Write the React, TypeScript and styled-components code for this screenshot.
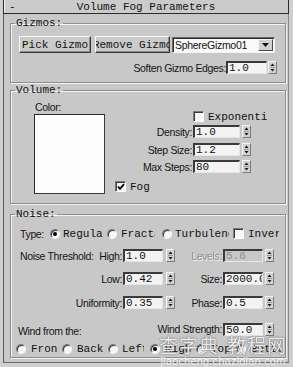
import React from 'react';
import styled, { createGlobalStyle } from 'styled-components';

const MONO = `"Liberation Mono", "DejaVu Sans Mono", monospace`;
const SANS = `"Liberation Sans", Arial, sans-serif`;

const Global = createGlobalStyle`
  html, body { margin: 0; padding: 0; background: #cdcdcd; }
  body { width: 293px; height: 367px; overflow: hidden; }
`;

const Screen = styled.div`
  position: relative;
  width: 293px;
  height: 367px;
  overflow: hidden;
  background: #cfcfcf;
  padding-left: 3px;
  box-sizing: border-box;
`;

const Rollout = styled.div`
  width: 286px;
  display: flex;
  flex-direction: column;
`;

const TitleBar = styled.div`
  height: 14px;
  box-sizing: border-box;
  border: 1px solid #2c2c2c;
  border-top: none;
  background: #cbcbcb;
  box-shadow: inset 1px 0 0 #f0f0f0;
  display: grid;
  grid-template-columns: 18px 1fr 18px;
  align-items: center;
  font: 11px/12px ${MONO};
  color: #111;
`;

const Collapse = styled.span`
  padding-left: 5px;
`;

const Title = styled.span`
  text-align: center;
`;

const Body = styled.div`
  height: 349px;
  box-sizing: border-box;
  border-left: 1px solid #5c5c5c;
  border-right: 1px solid #8a8a8a;
  border-bottom: 1px solid #6a6a6a;
  background: #c8c8c8;
  padding: 3px 1px 0 6px;
  display: flex;
  flex-direction: column;
`;

const Group = styled.fieldset<{ $h: number; $mt: number }>`
  margin: ${p => p.$mt}px 0 0 0;
  padding: 0;
  min-width: 0;
  width: 276px;
  height: ${p => p.$h}px;
  box-sizing: border-box;
  border: 1px solid #8c8c8c;
  box-shadow: 1px 1px 0 #f4f4f4, inset 1px 1px 0 #f4f4f4;
`;

const Legend = styled.legend`
  font: 11px/12px ${MONO};
  color: #111;
  margin-left: 4px;
  padding: 0 1px;
`;

const SansText = styled.span<{ $dim?: boolean }>`
  font: 10.5px/12px ${SANS};
  letter-spacing: -0.35px;
  color: ${p => (p.$dim ? '#8e8e8e' : '#141414')};
  text-shadow: ${p => (p.$dim ? '1px 1px 0 #f2f2f2' : 'none')};
  white-space: nowrap;
`;

const MonoText = styled.span<{ $w?: number }>`
  font: 11px/12px ${MONO};
  color: #111;
  white-space: nowrap;
  overflow: hidden;
  ${p => (p.$w ? `width: ${p.$w}px;` : '')}
  flex: none;
`;

/* ---------- Gizmos ---------- */
const GizmoInner = styled.div`
  padding: 7px 8px 0 8px;
  display: flex;
  flex-direction: column;
`;

const ButtonRow = styled.div`
  display: flex;
  align-items: center;
`;

const RaisedButton = styled.div<{ $w: number; $ml: number }>`
  width: ${p => p.$w}px;
  margin-left: ${p => p.$ml}px;
  height: 17px;
  box-sizing: border-box;
  background: #cbcbcb;
  border: 1px solid;
  border-color: #f6f6f6 #3a3a3a #3a3a3a #f6f6f6;
  box-shadow: inset -1px -1px 0 #8a8a8a;
  display: flex;
  justify-content: center;
  align-items: center;
  overflow: hidden;
  font: 11px/12px ${MONO};
  color: #111;
  white-space: nowrap;
  flex: none;
`;

const Dropdown = styled.div`
  margin-left: 2px;
  width: 103px;
  height: 16px;
  box-sizing: border-box;
  border: 1px solid;
  border-color: #6a6a6a #f4f4f4 #f4f4f4 #6a6a6a;
  box-shadow: inset 1px 1px 0 #2a2a2a;
  background: #fafafa;
  display: flex;
  align-items: center;
  padding: 1px 1px 1px 2px;
`;

const DropText = styled.span`
  flex: 1;
  font: 10.5px/12px ${SANS};
  letter-spacing: -0.3px;
  color: #111;
  white-space: nowrap;
`;

const DropArrow = styled.div`
  width: 15px;
  height: 12px;
  box-sizing: border-box;
  background: #d0d0d0;
  border: 1px solid;
  border-color: #f6f6f6 #4a4a4a #4a4a4a #f6f6f6;
  display: flex;
  align-items: center;
  justify-content: center;
`;

const SoftenRow = styled.div`
  margin-top: 8px;
  display: flex;
  justify-content: flex-end;
  align-items: center;
`;

/* ---------- Spinner ---------- */
const SpinWrap = styled.div`
  display: flex;
  align-items: center;
  flex: none;
`;

const SpinField = styled.div<{ $w: number; $disabled?: boolean }>`
  width: ${p => p.$w}px;
  height: 13px;
  box-sizing: border-box;
  border-style: solid;
  border-width: 2px 1px 1px 2px;
  border-color: #3a3a3a #e6e6e6 #e6e6e6 #3a3a3a;
  background: ${p => (p.$disabled ? '#c8c8c8' : '#f3f3f3')};
  color: ${p => (p.$disabled ? '#8e8e8e' : '#111')};
  font: 11px/10px ${MONO};
  padding-left: 1px;
  overflow: hidden;
  white-space: nowrap;
`;

const SpinArrows = styled.div<{ $ml: number }>`
  margin-left: ${p => p.$ml}px;
  width: 9px;
  height: 13px;
  box-sizing: border-box;
  background: #d2d2d2;
  border: 1px solid;
  border-color: #f4f4f4 #7a7a7a #7a7a7a #f4f4f4;
  display: flex;
  align-items: center;
  justify-content: center;
`;

const ArrowGlyph = () => (
  <svg width="5" height="9" viewBox="0 0 5 9">
    <path d="M2.5 0.5 L4.5 3 L0.5 3 Z" fill="#111" />
    <rect x="0" y="4" width="5" height="1" fill="#9a9a9a" />
    <path d="M0.5 6 L4.5 6 L2.5 8.5 Z" fill="#111" />
  </svg>
);

const Spinner = ({ value, w = 40, gap = 3, disabled }: { value: string; w?: number; gap?: number; disabled?: boolean }) => (
  <SpinWrap>
    <SpinField $w={w} $disabled={disabled}>{value}</SpinField>
    <SpinArrows $ml={gap}>
      <ArrowGlyph />
    </SpinArrows>
  </SpinWrap>
);

/* ---------- Radio / Check ---------- */
const RadioCircle = styled.span<{ $on?: boolean }>`
  width: 10px;
  height: 10px;
  border-radius: 50%;
  box-sizing: border-box;
  flex: none;
  background: #f6f6f6;
  border: 1px solid;
  border-color: #7a7a7a #fafafa #fafafa #7a7a7a;
  box-shadow: inset 1px 1px 0 #3a3a3a;
  display: flex;
  align-items: center;
  justify-content: center;
  &::after {
    content: '';
    width: 4px;
    height: 4px;
    border-radius: 50%;
    background: #000;
    display: ${p => (p.$on ? 'block' : 'none')};
  }
`;

const CheckBox = styled.span`
  width: 11px;
  height: 11px;
  box-sizing: border-box;
  flex: none;
  background: #f6f6f6;
  border: 1px solid;
  border-color: #7a7a7a #fafafa #fafafa #7a7a7a;
  box-shadow: inset 1px 1px 0 #3a3a3a;
  display: flex;
  align-items: center;
  justify-content: center;
`;

const Option = styled.div<{ $w?: number; $gap: number }>`
  display: flex;
  align-items: center;
  gap: ${p => p.$gap}px;
  ${p => (p.$w ? `width: ${p.$w}px;` : '')}
  flex: none;
  overflow: hidden;
`;

/* ---------- Volume ---------- */
const VolumeInner = styled.div`
  display: flex;
`;

const ColorCol = styled.div`
  margin-left: 23px;
  width: 71px;
  display: flex;
  flex-direction: column;
  padding-top: 5px;
`;

const ColorLabel = styled(SansText)`
  padding-left: 1px;
  margin-bottom: 1px;
`;

const Swatch = styled.div`
  width: 71px;
  height: 80px;
  box-sizing: border-box;
  background: #fdfdfd;
  border: 1px solid;
  border-color: #2a2a2a #3a3a3a #3a3a3a #2a2a2a;
`;

const VolRight = styled.div`
  margin-left: 10px;
  flex: 1;
  display: flex;
  flex-direction: column;
`;

const ExpRow = styled.div`
  margin-top: 15px;
  padding-left: 78px;
  height: 11px;
  display: flex;
  align-items: center;
`;

const VolSpinRow = styled.div<{ $mt: number }>`
  margin-top: ${p => p.$mt}px;
  display: grid;
  grid-template-columns: 78px auto;
  align-items: center;
  height: 13px;
`;

const RightLabel = styled.div`
  display: flex;
  justify-content: flex-end;
  align-items: center;
  min-width: 0;
  padding-right: 1px;
`;

const FogRow = styled.div`
  margin-top: 8px;
  height: 11px;
  display: flex;
  align-items: center;
`;

/* ---------- Noise ---------- */
const NoiseInner = styled.div`
  display: flex;
  flex-direction: column;
`;

const TypeRow = styled.div`
  margin-top: 8px;
  padding-left: 9px;
  height: 11px;
  display: flex;
  align-items: center;
`;

const NoiseRow = styled.div<{ $mt: number }>`
  margin-top: ${p => p.$mt}px;
  height: 13px;
  display: grid;
  grid-template-columns: 112px 52px 48px 52px;
  align-items: center;
`;

const ThresholdCell = styled.div`
  display: flex;
  justify-content: space-between;
  align-items: center;
  padding-left: 9px;
  padding-right: 1px;
`;

const WindLabel = styled.div`
  padding-left: 7px;
  align-self: end;
  margin-bottom: -2px;
`;

const DirRow = styled.div`
  margin-top: 9px;
  padding-left: 5px;
  height: 11px;
  display: flex;
  align-items: center;
`;

/* ---------- Watermark (overlay) ---------- */
const Watermark = styled.div`
  position: absolute;
  left: 156px;
  top: 334px;
  width: 134px;
  display: flex;
  flex-direction: column;
  align-items: center;
  pointer-events: none;
  white-space: nowrap;
`;

const WatermarkCn = styled.div`
  font: 19px/22px "Noto Sans CJK SC", sans-serif;
  color: rgba(255, 255, 255, 0.9);
  text-shadow: 0 0 1px rgba(70, 70, 70, 0.9), 0 0 2px rgba(90, 90, 90, 0.5);
  letter-spacing: 1px;
  display: flex;
  gap: 8px;
`;

const WatermarkUrl = styled.div`
  font: 11px/11px ${SANS};
  color: rgba(255, 255, 255, 0.95);
  text-shadow: 0 0 1px rgba(120, 120, 120, 0.6);
  letter-spacing: 0.2px;
`;

const CheckMark = () => (
  <svg width="8" height="8" viewBox="0 0 8 8">
    <path d="M1 3.5 L3 5.8 L7 1.2" stroke="#000" strokeWidth="1.8" fill="none" />
  </svg>
);

const DropTriangle = () => (
  <svg width="7" height="4" viewBox="0 0 7 4">
    <path d="M0 0 L7 0 L3.5 4 Z" fill="#111" />
  </svg>
);

export default function App() {
  return (
    <>
      <Global />
      <Screen>
        <Rollout>
          <TitleBar>
            <Collapse>-</Collapse>
            <Title>Volume Fog Parameters</Title>
            <span />
          </TitleBar>
          <Body>
            <Group $h={66} $mt={0}>
              <Legend>Gizmos:</Legend>
              <GizmoInner>
                <ButtonRow>
                  <RaisedButton $w={72} $ml={0}>Pick Gizmo</RaisedButton>
                  <RaisedButton $w={75} $ml={4}>Remove Gizmo</RaisedButton>
                  <Dropdown>
                    <DropText>SphereGizmo01</DropText>
                    <DropArrow>
                      <DropTriangle />
                    </DropArrow>
                  </Dropdown>
                </ButtonRow>
                <SoftenRow>
                  <SansText>Soften Gizmo Edges:</SansText>
                  <Spinner value="1.0" w={41} gap={1} />
                </SoftenRow>
              </GizmoInner>
            </Group>

            <Group $h={120} $mt={1}>
              <Legend>Volume:</Legend>
              <VolumeInner>
                <ColorCol>
                  <ColorLabel>Color:</ColorLabel>
                  <Swatch />
                </ColorCol>
                <VolRight>
                  <ExpRow>
                    <Option $gap={4}>
                      <CheckBox />
                      <MonoText $w={59}>Exponential</MonoText>
                    </Option>
                  </ExpRow>
                  <VolSpinRow $mt={3}>
                    <RightLabel><SansText>Density:</SansText></RightLabel>
                    <Spinner value="1.0" w={47} gap={2} />
                  </VolSpinRow>
                  <VolSpinRow $mt={5}>
                    <RightLabel><SansText>Step Size:</SansText></RightLabel>
                    <Spinner value="1.2" w={47} gap={2} />
                  </VolSpinRow>
                  <VolSpinRow $mt={4}>
                    <RightLabel><SansText>Max Steps:</SansText></RightLabel>
                    <Spinner value="80" w={47} gap={2} />
                  </VolSpinRow>
                  <FogRow>
                    <Option $gap={4}>
                      <CheckBox>
                        <CheckMark />
                      </CheckBox>
                      <MonoText>Fog</MonoText>
                    </Option>
                  </FogRow>
                </VolRight>
              </VolumeInner>
            </Group>

            <Group $h={150} $mt={4}>
              <Legend>Noise:</Legend>
              <NoiseInner>
                <TypeRow>
                  <Option $w={30} $gap={0}>
                    <SansText>Type:</SansText>
                  </Option>
                  <Option $w={57} $gap={3}>
                    <RadioCircle $on />
                    <MonoText $w={40}>Regular</MonoText>
                  </Option>
                  <Option $w={55} $gap={4}>
                    <RadioCircle />
                    <MonoText $w={34}>Fractal</MonoText>
                  </Option>
                  <Option $w={71} $gap={3}>
                    <RadioCircle />
                    <MonoText $w={54}>Turbulence</MonoText>
                  </Option>
                  <Option $gap={4}>
                    <CheckBox />
                    <MonoText $w={31}>Invert</MonoText>
                  </Option>
                </TypeRow>

                <NoiseRow $mt={10}>
                  <ThresholdCell>
                    <SansText>Noise Threshold:</SansText>
                    <SansText>High:</SansText>
                  </ThresholdCell>
                  <Spinner value="1.0" w={40} gap={3} />
                  <RightLabel><SansText $dim>Levels:</SansText></RightLabel>
                  <Spinner value="5.6" w={40} gap={2} disabled />
                </NoiseRow>

                <NoiseRow $mt={10}>
                  <RightLabel><SansText>Low:</SansText></RightLabel>
                  <Spinner value="0.42" w={40} gap={3} />
                  <RightLabel><SansText>Size:</SansText></RightLabel>
                  <Spinner value="2000.0" w={40} gap={2} />
                </NoiseRow>

                <NoiseRow $mt={11}>
                  <RightLabel><SansText>Uniformity:</SansText></RightLabel>
                  <Spinner value="0.35" w={40} gap={3} />
                  <RightLabel><SansText>Phase:</SansText></RightLabel>
                  <Spinner value="0.5" w={40} gap={2} />
                </NoiseRow>

                <NoiseRow $mt={12}>
                  <WindLabel><SansText>Wind from the:</SansText></WindLabel>
                  <span />
                  <RightLabel><SansText>Wind Strength:</SansText></RightLabel>
                  <Spinner value="50.0" w={40} gap={2} />
                </NoiseRow>

                <DirRow>
                  <Option $w={46} $gap={5}>
                    <RadioCircle />
                    <MonoText $w={27}>Front</MonoText>
                  </Option>
                  <Option $w={46} $gap={5}>
                    <RadioCircle />
                    <MonoText $w={27}>Back</MonoText>
                  </Option>
                  <Option $w={42} $gap={4}>
                    <RadioCircle />
                    <MonoText $w={22}>Left</MonoText>
                  </Option>
                  <Option $w={46} $gap={5}>
                    <RadioCircle $on />
                    <MonoText $w={27}>Right</MonoText>
                  </Option>
                  <Option $w={40} $gap={5}>
                    <RadioCircle />
                    <MonoText $w={22}>Top</MonoText>
                  </Option>
                  <Option $gap={5}>
                    <RadioCircle />
                    <MonoText $w={30}>Bottom</MonoText>
                  </Option>
                </DirRow>
              </NoiseInner>
            </Group>
          </Body>
        </Rollout>
        <Watermark>
          <WatermarkCn>
            <span>查字典</span>
            <span>教程网</span>
          </WatermarkCn>
          <WatermarkUrl>jiaocheng.chazidian.com</WatermarkUrl>
        </Watermark>
      </Screen>
    </>
  );
}
